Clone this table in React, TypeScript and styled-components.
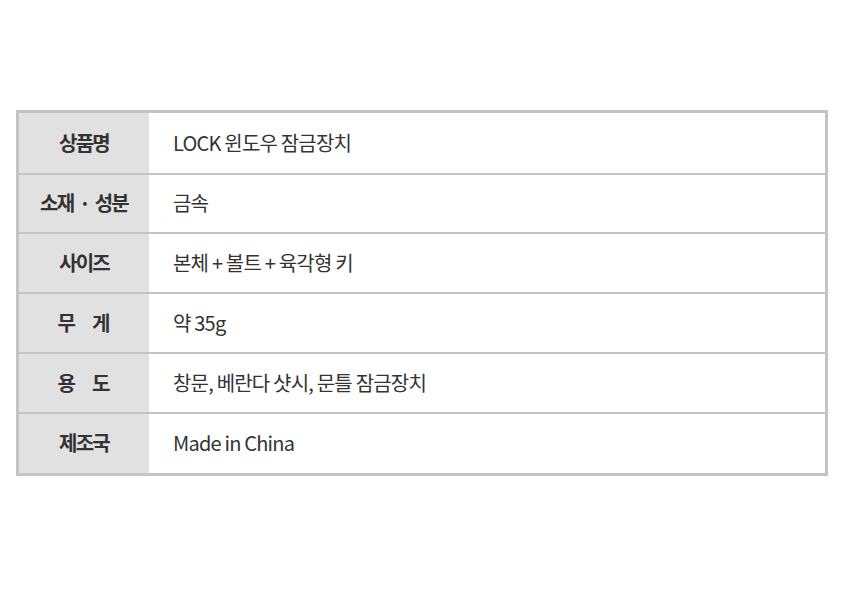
import styled, { createGlobalStyle } from "styled-components"

const GlobalStyle = createGlobalStyle`
    html, body {
        margin: 0;
        padding: 0;
        background: #ffffff;
    }
    body {
        font-family: "Noto Sans CJK KR", "Noto Sans", sans-serif;
        color: #333333;
    }
`

const Page = styled.div`
    width: 850px;
    height: 594px;
    padding: 110px 22px 0 16px;
    box-sizing: border-box;
`

const Table = styled.div`
    border: 3px solid #c4c4c4;
    display: flex;
    flex-direction: column;
`

const Row = styled.div<{ $h: number }>`
    display: grid;
    grid-template-columns: 130px 1fr;
    height: ${(p) => p.$h}px;

    &:not(:last-child) {
        border-bottom: 2px solid #c4c4c4;
    }
`

const Label = styled.div`
    background: #e1e1e1;
    display: flex;
    align-items: center;
    justify-content: center;
    padding-bottom: 2px;
    font-size: 20px;
    font-weight: 700;
    letter-spacing: -1.8px;
    word-spacing: 3px;
    color: #333333;
`

const Spread = styled.span`
    display: inline-flex;
    gap: 16px;
    letter-spacing: 0;
`

const Value = styled.div`
    display: flex;
    align-items: center;
    padding: 0 0 2px 24px;
    font-size: 20px;
    letter-spacing: -0.8px;
    color: #333333;
`

const rows = [
    { label: "상품명", value: "LOCK 윈도우 잠금장치", h: 60 },
    { label: "소재 · 성분", value: "금속", h: 57 },
    { label: "사이즈", value: "본체 + 볼트 + 육각형 키", h: 58 },
    { label: ["무", "게"], value: "약 35g", h: 58 },
    { label: ["용", "도"], value: "창문, 베란다 샷시, 문틀 잠금장치", h: 58 },
    { label: "제조국", value: "Made in China", h: 59 },
]

const App = () => {
    return (
        <>
            <GlobalStyle />
            <Page>
                <Table>
                    {rows.map((r, i) => (
                        <Row key={i} $h={r.h}>
                            <Label>
                                {Array.isArray(r.label) ? (
                                    <Spread>
                                        {r.label.map((c) => (
                                            <span key={c}>{c}</span>
                                        ))}
                                    </Spread>
                                ) : (
                                    r.label
                                )}
                            </Label>
                            <Value>{r.value}</Value>
                        </Row>
                    ))}
                </Table>
            </Page>
        </>
    )
}

export default App
